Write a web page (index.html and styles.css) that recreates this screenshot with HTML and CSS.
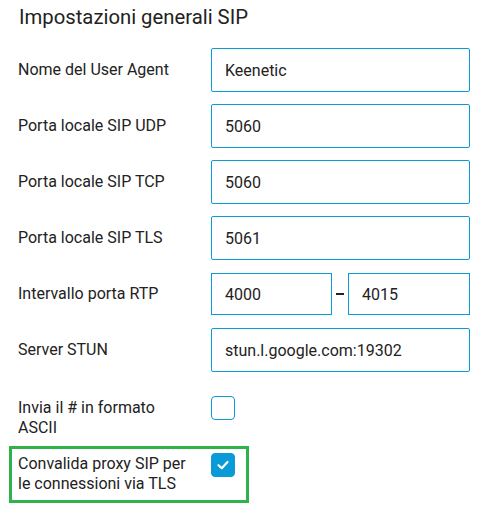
FILE: index.html
```html
<!DOCTYPE html>
<html lang="it">
<head>
<meta charset="utf-8">
<link rel="stylesheet" href="styles.css">
</head>
<body>
<div class="panel">
  <h1 class="title">Impostazioni generali SIP</h1>
  <div class="row">
    <label class="label">Nome del User Agent</label>
    <div class="input">Keenetic</div>
  </div>
  <div class="row">
    <label class="label">Porta locale SIP UDP</label>
    <div class="input">5060</div>
  </div>
  <div class="row">
    <label class="label">Porta locale SIP TCP</label>
    <div class="input">5060</div>
  </div>
  <div class="row">
    <label class="label">Porta locale SIP TLS</label>
    <div class="input">5061</div>
  </div>
  <div class="row">
    <label class="label">Intervallo porta RTP</label>
    <div class="range">
      <div class="input input-small">4000</div>
      <span class="dash"></span>
      <div class="input input-small">4015</div>
    </div>
  </div>
  <div class="row">
    <label class="label">Server STUN</label>
    <div class="input">stun.l.google.com:19302</div>
  </div>
  <div class="check-row first">
    <label class="label label-wrap">Invia il # in formato ASCII</label>
    <span class="checkbox"></span>
  </div>
  <div class="check-row highlight">
    <label class="label label-wrap">Convalida proxy SIP per le connessioni via TLS</label>
    <span class="checkbox checked">
      <svg width="14" height="12" viewBox="0 0 14 12"><polyline points="2.5,6.2 5.8,9.2 11.5,3" fill="none" stroke="#fff" stroke-width="2.2" stroke-linecap="round" stroke-linejoin="round"/></svg>
    </span>
  </div>
</div>
</body>
</html>
```
FILE: styles.css
```css
* { box-sizing: border-box; }
html, body { margin: 0; padding: 0; background: #fff; }
body {
  font-family: Roboto, "Liberation Sans", sans-serif;
  color: #222;
  width: 484px;
  height: 516px;
  overflow: hidden;
}
.panel {
  padding: 5px 14px 0 18px;
}
.title {
  margin: 0 0 19px 1px;
  font-size: 20.3px;
  font-weight: 400;
  line-height: 24px;
  color: #222;
}
.row {
  display: flex;
  align-items: center;
  height: 44px;
  margin-bottom: 12px;
}
.label {
  width: 193px;
  flex: none;
  font-size: 16px;
  line-height: 20px;
  padding-right: 20px;
}
.input {
  width: 259px;
  height: 44px;
  border: 1px solid #0b9ad8;
  border-radius: 2px;
  padding: 0 13px;
  display: flex;
  align-items: center;
  font-size: 16px;
  color: #222;
}
.range {
  display: flex;
  align-items: center;
  width: 259px;
}
.input-small {
  width: 121px;
  height: 42px;
  border-radius: 0;
}
.range .input-small:last-child { width: 122px; }
.dash {
  display: block;
  width: 8px;
  height: 2px;
  background: #222;
  margin: 0 4px 0 4px;
}
.check-row {
  display: flex;
  align-items: flex-start;
}
.check-row.first {
  margin-top: 24px;
  height: 42px;
}
.check-row.first .label { padding-top: 2px; }
.checkbox {
  width: 24px;
  height: 24px;
  border: 1px solid #0b9ad8;
  border-radius: 4px;
  flex: none;
  display: flex;
  align-items: center;
  justify-content: center;
}
.checkbox.checked {
  background: #0b9ad8;
}
.highlight {
  margin-top: 8px;
  margin-left: -9px;
  width: 240px;
  height: 57px;
  border: 3px solid #2db34a;
  padding: 4px 0 0 6px;
}
.highlight .label { padding-top: 1px; }
```
